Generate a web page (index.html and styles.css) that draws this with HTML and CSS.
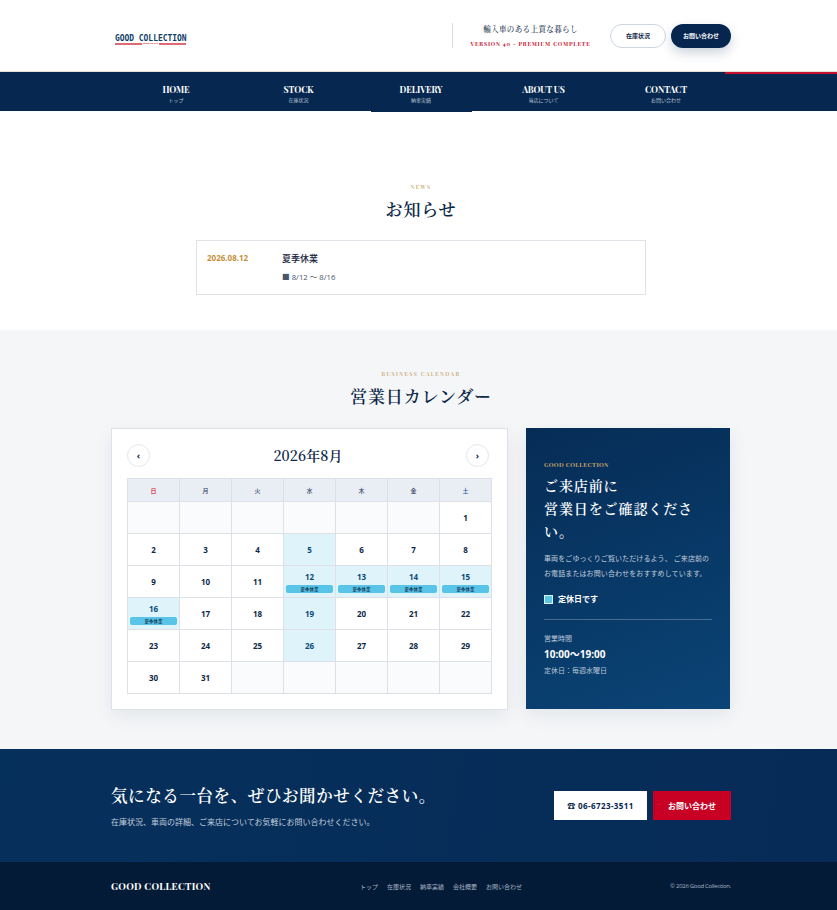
FILE: index.html
```html
<!DOCTYPE html>
<html lang="ja">
<head>
<meta charset="utf-8">
<title>Good Collection</title>
<link rel="stylesheet" href="styles.css">
</head>
<body>
<header class="site-header">
  <a class="logo">
    <span class="logo-name">GOOD COLLECTION</span>
    <span class="logo-rule"><span class="logo-sub">GOOD CAR LIFE</span></span>
  </a>
  <div class="header-right">
    <div class="tagline">
      <p class="tagline-main">輸入車のある上質な暮らし</p>
      <p class="tagline-sub">VERSION 40 - PREMIUM COMPLETE</p>
    </div>
    <a class="pill pill-outline">在庫状況</a>
    <a class="pill pill-solid">お問い合わせ</a>
  </div>
</header>
<nav class="main-nav">
  <a class="nav-item"><strong>HOME</strong><span>トップ</span></a>
  <a class="nav-item"><strong>STOCK</strong><span>在庫状況</span></a>
  <a class="nav-item is-current"><strong>DELIVERY</strong><span>納車実績</span></a>
  <a class="nav-item"><strong>ABOUT US</strong><span>当店について</span></a>
  <a class="nav-item"><strong>CONTACT</strong><span>お問い合わせ</span></a>
</nav>
<main>
  <section class="news">
    <p class="eyebrow">NEWS</p>
    <h2 class="section-title">お知らせ</h2>
    <article class="news-card">
      <time class="news-date">2026.08.12</time>
      <div class="news-body">
        <h3>夏季休業</h3>
        <p>■ 8/12 〜 8/16</p>
      </div>
    </article>
  </section>
  <section class="calendar-section">
    <p class="eyebrow">BUSINESS CALENDAR</p>
    <h2 class="section-title">営業日カレンダー</h2>
    <div class="calendar-layout">
      <div class="calendar-card">
        <div class="calendar-head">
          <button class="round-btn">‹</button>
          <h3>2026年8月</h3>
          <button class="round-btn">›</button>
        </div>
        <table class="calendar">
          <thead>
            <tr><th class="sun">日</th><th>月</th><th>火</th><th>水</th><th>木</th><th>金</th><th class="sat">土</th></tr>
          </thead>
          <tbody>
            <tr><td class="empty"></td><td class="empty"></td><td class="empty"></td><td class="empty"></td><td class="empty"></td><td class="empty"></td><td>1</td></tr>
            <tr><td>2</td><td>3</td><td>4</td><td class="closed">5</td><td>6</td><td>7</td><td>8</td></tr>
            <tr><td>9</td><td>10</td><td>11</td><td class="closed">12<span class="tag">夏季休業</span></td><td class="closed">13<span class="tag">夏季休業</span></td><td class="closed">14<span class="tag">夏季休業</span></td><td class="closed">15<span class="tag">夏季休業</span></td></tr>
            <tr><td class="closed">16<span class="tag">夏季休業</span></td><td>17</td><td>18</td><td class="closed">19</td><td>20</td><td>21</td><td>22</td></tr>
            <tr><td>23</td><td>24</td><td>25</td><td class="closed">26</td><td>27</td><td>28</td><td>29</td></tr>
            <tr><td>30</td><td>31</td><td class="empty"></td><td class="empty"></td><td class="empty"></td><td class="empty"></td><td class="empty"></td></tr>
          </tbody>
        </table>
      </div>
      <aside class="info-panel">
        <p class="info-brand">GOOD COLLECTION</p>
        <h3>ご来店前に<br>営業日をご確認ください。</h3>
        <p class="info-text">車両をごゆっくりご覧いただけるよう、 ご来店前のお電話またはお問い合わせをおすすめしています。</p>
        <p class="legend"><i class="legend-box"></i>定休日です</p>
        <div class="hours">
          <p class="hours-label">営業時間</p>
          <p class="hours-time">10:00〜19:00</p>
          <p class="hours-note">定休日：毎週水曜日</p>
        </div>
      </aside>
    </div>
  </section>
  <section class="cta">
    <div class="cta-copy">
      <h2>気になる一台を、ぜひお聞かせください。</h2>
      <p>在庫状況、車両の詳細、ご来店についてお気軽にお問い合わせください。</p>
    </div>
    <div class="cta-actions">
      <a class="cta-btn cta-tel">☎ 06-6723-3511</a>
      <a class="cta-btn cta-mail">お問い合わせ</a>
    </div>
  </section>
</main>
<footer class="site-footer">
  <p class="footer-logo">GOOD COLLECTION</p>
  <ul class="footer-links">
    <li>トップ</li><li>在庫状況</li><li>納車実績</li><li>会社概要</li><li>お問い合わせ</li>
  </ul>
  <p class="copyright">© 2026 Good Collection.</p>
</footer>
</body>
</html>
```
FILE: styles.css
```css
* { box-sizing: border-box; margin: 0; padding: 0; }
html, body { background: #fff; }
body {
  font-family: "Open Sans", "Noto Sans CJK JP", sans-serif;
  color: #1a2a44;
  width: 837px;
  height: 910px;
  overflow: hidden;
}
ul { list-style: none; }

.site-header {
  height: 72px;
  padding: 0 106px 0 115px;
  display: flex;
  align-items: center;
  justify-content: space-between;
  border-bottom: 1px solid #e5dfd3;
}
.logo { display: flex; flex-direction: column; width: 71px; margin-top: 9px; }
.logo-name {
  font: 700 8px/8px "DejaVu Sans Mono", monospace;
  letter-spacing: -0.05px;
  color: #0f4068;
  white-space: nowrap;
}
.logo-rule {
  height: 2px;
  background: #e06a74;
  display: flex;
  justify-content: center;
  align-items: center;
}
.logo-sub {
  font: 700 2px/2px "Noto Sans", sans-serif;
  color: #c8102e;
  background: #fff;
  padding: 0 1px;
  white-space: nowrap;
}
.header-right { display: flex; align-items: center; }
.tagline {
  border-left: 1px solid #d9dee5;
  height: 25px;
  width: 158px;
  padding: 0 18px 0 16px;
  text-align: center;
  font-family: "Noto Serif CJK JP", serif;
}
.tagline-main { font-size: 7.6px; line-height: 11px; font-weight: 500; letter-spacing: .3px; color: #1a2f50; white-space: nowrap; }
.tagline-sub {
  font-family: "Playfair Display", Georgia, "Noto Serif CJK JP", serif;
  font-size: 5.5px;
  line-height: 8px;
  margin: 6px -4px 0;
  font-weight: 700;
  letter-spacing: .82px;
  color: #c8102e;
  white-space: nowrap;
}
.pill {
  height: 24px;
  border-radius: 12px;
  display: flex;
  align-items: center;
  justify-content: center;
  font-size: 6px;
  font-weight: 700;
}
.pill-outline { width: 56px; border: 1px solid #cdd5e0; color: #12294d; margin-right: 5px; }
.pill-solid { width: 60px; background: #06264f; color: #fff; box-shadow: 0 5px 12px rgba(6, 38, 79, .2); }

.main-nav {
  position: relative;
  height: 39px;
  background: #062850;
  display: flex;
  justify-content: center;
  gap: 21.5px;
  padding: 0 106px 0 111px;
}
.main-nav::after {
  content: "";
  position: absolute;
  top: 0;
  right: 0;
  width: 112px;
  height: 2px;
  background: #c8102e;
}
.nav-item {
  width: 101px;
  flex: none;
  display: flex;
  flex-direction: column;
  align-items: center;
  padding-top: 11px;
  color: #fff;
}
.nav-item strong {
  font: 700 8.8px/12px "Playfair Display", Georgia, "Noto Serif CJK JP", serif;
  letter-spacing: -.1px;
}
.nav-item span { font-size: 5px; line-height: 8px; margin-top: 1px; color: #b9c4d3; }
.nav-item.is-current { height: 40px; position: relative; z-index: 1; background: #062850; }

.eyebrow {
  font: 500 5.5px/8px "Playfair Display", Georgia, "Noto Serif CJK JP", serif;
  letter-spacing: 1.35px;
  color: #c49a58;
  text-align: center;
}
.section-title {
  font: 600 17px/26px "Noto Serif CJK JP", serif;
  letter-spacing: .85px;
  color: #0d2747;
  text-align: center;
  margin-top: 4.5px;
}
.news {
  height: 219px;
  padding: 72px 106px 0 111px;
}
.news-card {
  width: 450px;
  height: 55px;
  margin: 18.5px auto 0;
  border: 1px solid #dfe3e8;
  display: flex;
  padding: 10px;
}
.news-date { width: 75px; font-size: 8px; line-height: 14px; font-weight: 700; color: #c4903c; }
.news-body h3 { font-size: 9px; line-height: 14px; font-weight: 500; color: #16243c; margin-top: 1px; }
.news-body p { font-size: 7.7px; line-height: 12px; margin-top: 5px; color: #48566a; }

.calendar-section {
  height: 419px;
  background: #f4f6f8;
  padding: 40px 106px 0 111px;
}
.calendar-layout {
  display: flex;
  gap: 18px;
  margin-top: 19.5px;
  align-items: flex-start;
}
.calendar-card {
  width: 397px;
  height: 282px;
  background: #fff;
  border: 1px solid #dfe3e8;
  box-shadow: 0 6px 18px rgba(10, 30, 60, .07);
  padding: 15px 15px 0;
}
.calendar-head {
  display: flex;
  align-items: center;
  justify-content: space-between;
  height: 23px;
  width: 362px;
  margin-bottom: 11px;
}
.calendar-head h3 {
  font: 600 14px/20px "Noto Serif CJK JP", serif;
  letter-spacing: .1px;
  color: #0d2747;
  margin-bottom: 2px;
}
.round-btn {
  width: 23px;
  height: 23px;
  border-radius: 50%;
  border: 1px solid #e2e6ec;
  background: #fff;
  color: #06264f;
  font: 700 9px/18px "Noto Sans", sans-serif;
}
.calendar {
  border-collapse: collapse;
  table-layout: fixed;
  width: 365px;
}
.calendar th, .calendar td { border: 1px solid #dde1e7; text-align: center; }
.calendar th {
  height: 23px;
  background: #e9eef5;
  font-size: 6px;
  font-weight: 500;
  color: #304664;
}
.calendar th.sun { color: #c8102e; }
.calendar th.sat { color: #2a5a9c; }
.calendar td {
  height: 32px;
  font-size: 8px;
  font-weight: 700;
  color: #0d2747;
  vertical-align: middle;
  background: #fff;
  padding: 0 2px;
}
.calendar td.empty { background: #fafbfd; }
.calendar td.closed { background: #dff3fb; color: #0a4a7a; }
.tag {
  display: block;
  height: 8px;
  margin-top: 3px;
  border-radius: 2px;
  background: #58c4e8;
  color: #0d2747;
  font-size: 4.5px;
  line-height: 8px;
  font-weight: 500;
}

.info-panel {
  width: 204px;
  height: 281px;
  padding: 33px 18px 0;
  color: #fff;
  background: linear-gradient(160deg, #062c56, #0a4476);
  box-shadow: 0 6px 18px rgba(10, 30, 60, .08);
}
.info-brand { font: 700 6px/8px "Playfair Display", Georgia, "Noto Serif CJK JP", serif; letter-spacing: .35px; color: #c8a468; }
.info-panel h3 {
  font: 600 14px/23px "Noto Serif CJK JP", serif;
  letter-spacing: .9px;
  margin-top: 5px;
}
.info-text { font-size: 7px; line-height: 15px; color: #c1cddc; margin-top: 8px; letter-spacing: .1px; }
.legend { display: flex; align-items: center; font-size: 8px; font-weight: 700; margin-top: 12px; line-height: 12px; }
.legend-box {
  width: 9px;
  height: 9px;
  background: #58c4e8;
  border: 1px solid #dff3fb;
  margin-right: 5px;
}
.hours { border-top: 1px solid rgba(255,255,255,.25); margin-top: 14px; padding-top: 14px; }
.hours-label { font-size: 7px; line-height: 10px; color: #b6c4d6; }
.hours-time { font-size: 10px; line-height: 14px; font-weight: 700; margin-top: 3px; }
.hours-note { font-size: 7px; line-height: 10px; color: #b6c4d6; margin-top: 5px; }

.cta {
  height: 113px;
  background: linear-gradient(100deg, #06305c, #062b56);
  padding: 34px 106px 0 111px;
  display: flex;
  justify-content: space-between;
  color: #fff;
}
.cta-copy h2 {
  font: 600 16.5px/24px "Noto Serif CJK JP", serif;
  letter-spacing: .6px;
}
.cta-copy p { font-size: 8px; line-height: 12px; color: #c1cddc; margin-top: 9px; }
.cta-actions { display: flex; gap: 6px; padding-top: 8px; }
.cta-btn {
  height: 29px;
  display: flex;
  align-items: center;
  justify-content: center;
  font-size: 8px;
  font-weight: 700;
}
.cta-tel { width: 93px; background: #fff; color: #06264f; letter-spacing: .4px; }
.cta-mail { width: 78px; background: #c80024; color: #fff; }

.site-footer {
  height: 48px;
  background: #031b37;
  padding: 0 106px 0 111px;
  display: flex;
  align-items: center;
  color: #a9b5c4;
}
.footer-logo { font: 700 9.6px/14px "Playfair Display", Georgia, "Noto Serif CJK JP", serif; letter-spacing: .3px; color: #fff; width: 170px; }
.footer-links { display: flex; gap: 9px; font-size: 6px; margin-left: 79px; }
.copyright { font-size: 6px; letter-spacing: -.3px; margin-left: auto; }
```
